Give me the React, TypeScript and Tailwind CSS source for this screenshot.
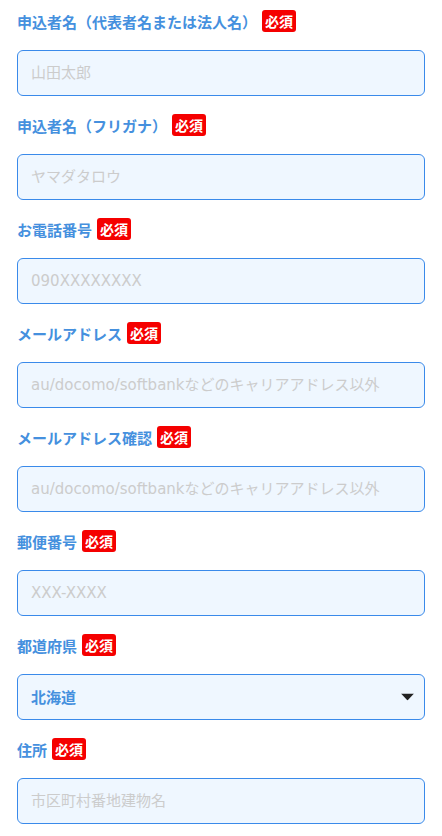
import { useState } from "react";

const fields = [
  { label: "申込者名（代表者名または法人名）", placeholder: "山田太郎" },
  { label: "申込者名（フリガナ）", placeholder: "ヤマダタロウ" },
  { label: "お電話番号", placeholder: "090XXXXXXXX" },
  { label: "メールアドレス", placeholder: "au/docomo/softbankなどのキャリアアドレス以外" },
  { label: "メールアドレス確認", placeholder: "au/docomo/softbankなどのキャリアアドレス以外" },
  { label: "郵便番号", placeholder: "XXX-XXXX" },
];

const inputCls =
  "mt-[18px] block h-[46px] w-full rounded-[6px] border border-[#3a8aea] bg-[#eff7ff] px-[13px] font-['DejaVu_Sans','Noto_Sans_CJK_JP',sans-serif] text-[15px] text-gray-700 outline-none placeholder:text-[#cccccc]";

function Label({ text }: { text: string }) {
  return (
    <div className="flex h-[22px] items-center gap-[5px]">
      <span className="text-[15px] font-bold leading-none text-[#4590de]">{text}</span>
      <span className="flex h-[22px] items-center rounded-[3px] bg-[#f50000] px-[3px] text-[14px] font-bold leading-none text-white">
        必須
      </span>
    </div>
  );
}

export default function App() {
  const [pref, setPref] = useState("北海道");

  return (
    <div
      className="min-h-screen bg-white px-[17px] pt-[10px]"
      style={{ fontFamily: '"Noto Sans CJK JP", "Noto Sans", sans-serif' }}
    >
      {fields.map((f) => (
        <div key={f.label} className="mb-[18px]">
          <Label text={f.label} />
          <input className={inputCls} placeholder={f.placeholder} />
        </div>
      ))}

      {/* 都道府県 */}
      <div className="mb-[18px]">
        <Label text="都道府県" />
        <div className="relative mt-[18px]">
          <select
            value={pref}
            onChange={(e) => setPref(e.target.value)}
            className="block h-[46px] w-full appearance-none rounded-[6px] border border-[#3a8aea] bg-[#eff7ff] px-[13px] text-[15px] font-bold text-[#4590de] outline-none"
          >
            <option>北海道</option>
            <option>青森県</option>
            <option>岩手県</option>
          </select>
          <svg
            className="pointer-events-none absolute right-[11px] top-1/2 -translate-y-1/2"
            width="13"
            height="7"
            viewBox="0 0 13 7"
          >
            <path d="M0 0h13L6.5 7z" fill="#222" />
          </svg>
        </div>
      </div>

      {/* 住所 */}
      <div className="mb-[18px]">
        <Label text="住所" />
        <input className={inputCls} placeholder="市区町村番地建物名" />
      </div>
    </div>
  );
}
